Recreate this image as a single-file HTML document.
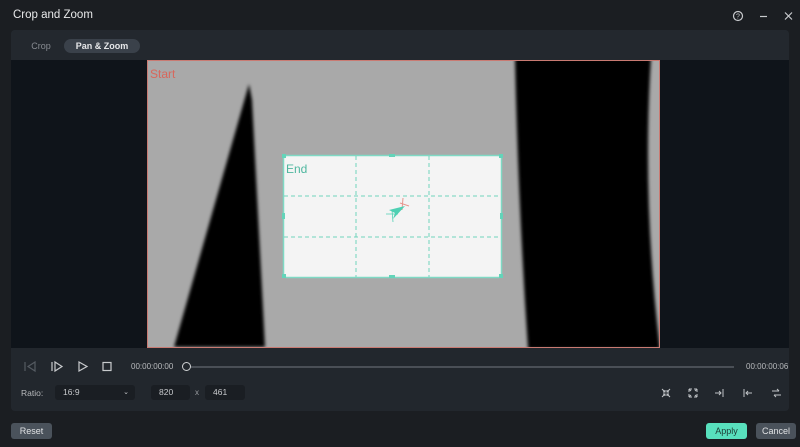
<!DOCTYPE html>
<html><head><meta charset="utf-8"><style>
*{margin:0;padding:0;box-sizing:border-box}
body{width:800px;height:447px;background:#1b1e22;font-family:"Liberation Sans",sans-serif;color:#d8dadd;position:relative;overflow:hidden}
.abs{position:absolute}
.title{left:13px;top:9px;font-size:11.5px;color:#e8e9ea}
.panel{left:11px;top:30px;width:778px;height:381px;background:#23282e;border-radius:4px;overflow:hidden}
.tabs{left:0;top:0;width:778px;height:30px;background:#23282e}
.tab{top:9px;font-size:9px;height:14px;line-height:14px;border-radius:7px;text-align:center}
.prev{left:0;top:30px;width:778px;height:288px;background:#0f141a}
.ctrl{left:0;top:318px;width:778px;height:63px;background:#22272d}
.btn{font-size:9px;height:16px;line-height:16px;border-radius:3px;text-align:center}
.inp{background:#1a1e23;border-radius:3px;height:15px;line-height:15px;font-size:8.5px;color:#c8cacd;padding-left:8px}
</style></head><body>
<div class="abs title">Crop and Zoom</div>
<svg class="abs" style="left:730px;top:9px" width="64" height="14" viewBox="0 0 64 14">
<circle cx="8" cy="7" r="4.5" fill="none" stroke="#c8cacd" stroke-width="1.2"/>
<text x="8" y="9.5" font-size="7" text-anchor="middle" fill="#c8cacd" font-family="Liberation Sans">?</text>
<line x1="30" y1="7.5" x2="37" y2="7.5" stroke="#c8cacd" stroke-width="1.2"/>
<path d="M55 3.5L62 10.5M62 3.5L55 10.5" stroke="#c8cacd" stroke-width="1.2"/>
</svg>
<div class="abs panel">
 <div class="abs tabs"></div>
 <div class="abs tab" style="left:18px;width:24px;color:#888c92">Crop</div>
 <div class="abs tab" style="left:53px;width:76px;background:#3a414a;color:#e6e7e9;font-weight:bold">Pan &amp; Zoom</div>
 <div class="abs prev"></div>
 <div class="abs ctrl"></div>
</div>
<svg class="abs" style="left:147px;top:60px" width="513" height="288" viewBox="147 60 513 288">
<rect x="147" y="60" width="513" height="288" fill="#a9a9a9"/>
<defs><filter id="b"><feGaussianBlur stdDeviation="1.5"/></filter></defs>
<polygon points="249,84 252,100 265,347 174,347" fill="#000" filter="url(#b)"/>
<path d="M515,58 L651,58 Q642,200 660,349 L528,349 Q518,200 515,58Z" fill="#000" filter="url(#b)"/>
<rect x="147.5" y="60.5" width="512" height="287" fill="none" stroke="#c97a72" stroke-width="1"/>
<text x="150" y="78" font-size="12" fill="#d8675c" font-family="Liberation Sans">Start</text>
<rect x="283.5" y="155.5" width="218" height="122" rx="3" fill="#f4f4f4" stroke="#7fd9c4" stroke-width="1.5"/>
<g stroke="#6fd3bb" stroke-width="1" stroke-dasharray="4,3">
<line x1="356" y1="156" x2="356" y2="277"/><line x1="429" y1="156" x2="429" y2="277"/>
<line x1="284" y1="196" x2="501" y2="196"/><line x1="284" y1="237" x2="501" y2="237"/>
</g>
<g fill="#63d4b9"><rect x="282" y="154" width="4" height="4"/><rect x="499" y="154" width="4" height="4"/><rect x="282" y="274" width="4" height="4"/><rect x="499" y="274" width="4" height="4"/><rect x="389" y="154" width="6" height="3"/><rect x="389" y="275" width="6" height="3"/><rect x="282" y="213" width="3" height="6"/><rect x="500" y="213" width="3" height="6"/></g>
<text x="286" y="173" font-size="12" fill="#4fb79f" font-family="Liberation Sans">End</text>
<path d="M400,203 L409,206" stroke="#e8958d" stroke-width="1"/><path d="M403,198 L402,210" stroke="#e8958d" stroke-width="1"/>
<path d="M405,206 L389,210 L395,213 L393,219 Z" fill="#4fd0b3"/>
<path d="M386,214 L398,214 M392,210 L393,222" stroke="#4fd0b3" stroke-width="0.8"/>
</svg>
<svg class="abs" style="left:18px;top:358px" width="110" height="18" viewBox="0 0 110 18">
<path d="M7 4V13M17 4L10 8.5L17 13Z" fill="none" stroke="#555b62" stroke-width="1.2"/>
<path d="M34 4V13M37 4L44 8.5L37 13Z" fill="none" stroke="#c8cacd" stroke-width="1.2"/>
<path d="M61 4L69 8.5L61 13Z" fill="none" stroke="#c8cacd" stroke-width="1.2"/>
<rect x="85" y="4.5" width="8" height="8" fill="none" stroke="#c8cacd" stroke-width="1.2"/>
</svg>
<div class="abs" style="left:131px;top:362px;font-size:8px;color:#b8babd">00:00:00:00</div>
<div class="abs" style="left:189px;top:366px;width:545px;height:2px;background:#4a4f56"></div>
<div class="abs" style="left:182px;top:362px;width:9px;height:9px;border:1.3px solid #d0d2d4;border-radius:50%;background:#22272d"></div>
<div class="abs" style="left:746px;top:362px;font-size:8px;color:#b8babd">00:00:00:06</div>
<div class="abs" style="left:21px;top:388px;font-size:8.5px;color:#b8babd">Ratio:</div>
<div class="abs inp" style="left:55px;top:385px;width:80px">16:9<span style="position:absolute;right:6px;top:0;font-size:7px">&#8964;</span></div>
<div class="abs inp" style="left:151px;top:385px;width:39px">820</div>
<div class="abs" style="left:195px;top:388px;font-size:8px;color:#9a9da1">x</div>
<div class="abs inp" style="left:205px;top:385px;width:40px">461</div>
<svg class="abs" style="left:658px;top:385px" width="130" height="16" viewBox="0 0 130 16">
<g stroke="#c0c3c6" stroke-width="1" fill="none">
<path d="M4 4L7 7M7 5V7H5M12 4L9 7M9 5V7H11M4 12L7 9M5 9H7V11M12 12L9 9M9 11V9H11"/>
<path d="M31 4H34M31 4V7M31 4L33 6M39 4H36M39 4V7M39 4L37 6M31 12H34M31 12V9M31 12L33 10M39 12H36M39 12V9M39 12L37 10"/>
<path d="M57 8H63M61 6L63 8L61 10M65 4V12"/>
<path d="M86 4V12M88 8H94M90 6L88 8L90 10"/>
<path d="M114 6H121M119 4L121 6M123 10H116M118 12L116 10"/>
</g></svg>
<div class="abs btn" style="left:11px;top:423px;width:41px;background:#4a525b;color:#e0e2e4">Reset</div>
<div class="abs btn" style="left:706px;top:423px;width:41px;background:#58e0bd;color:#1d3b34">Apply</div>
<div class="abs btn" style="left:756px;top:423px;width:40px;background:#4a525b;color:#e0e2e4">Cancel</div>
</body></html>
